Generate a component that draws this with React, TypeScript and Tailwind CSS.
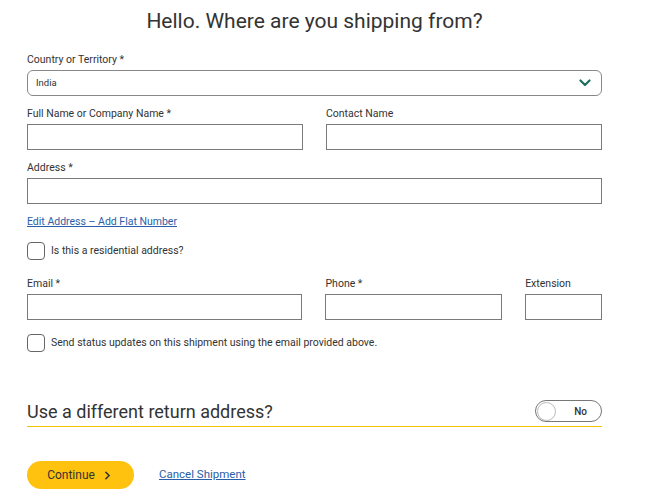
import { ChevronRight } from 'lucide-react';

// Formulario de envío: dirección de origen
function Label({ children }: { children: React.ReactNode }) {
  return <div className="h-[15px] pt-[1px] text-[10.5px] leading-[14px] text-[#333] mb-[3px]">{children}</div>;
}

function Input({ className = '' }: { className?: string }) {
  return <div className={`h-[26px] border border-[#7a7a7a] bg-white ${className}`} />;
}

function Checkbox({ text }: { text: string }) {
  return (
    <div className="flex items-center gap-[6px]">
      <div className="w-[18px] h-[18px] rounded-[4px] border border-[#666] bg-white" />
      <span className="text-[10.5px] leading-[14px] text-[#333]">{text}</span>
    </div>
  );
}

export default function App() {
  return (
    <div className="w-[664px] h-[489px] overflow-hidden bg-white font-['Roboto',sans-serif]">
      <div className="w-[575px] ml-[27px]">
        <h1 className="mt-[7px] h-[28px] text-center text-[21px] leading-[28px] text-[#333]">
          Hello. Where are you shipping from?
        </h1>

        <div className="mt-[17px]">
          <Label>Country or Territory *</Label>
          <div className="h-[26px] rounded-[6px] border border-[#888] flex items-center justify-between pl-[8px] pr-[10px]">
            <span className="text-[9.5px] text-[#333]">India</span>
            <svg width="12" height="8" viewBox="0 0 12 8" fill="none">
              <path d="M1.5 1.5 6 6l4.5-4.5" stroke="#1d6f5f" strokeWidth="2.2" strokeLinecap="round" strokeLinejoin="round" />
            </svg>
          </div>
        </div>

        <div className="mt-[10px] flex gap-[23px]">
          <div className="w-[276px]">
            <Label>Full Name or Company Name *</Label>
            <Input />
          </div>
          <div className="w-[276px]">
            <Label>Contact Name</Label>
            <Input />
          </div>
        </div>

        <div className="mt-[10px]">
          <Label>Address *</Label>
          <Input />
        </div>

        <a href="#" className="block mt-[11px] h-[14px] text-[10.5px] leading-[14px] text-[#2a5ea8] underline">
          Edit Address – Add Flat Number
        </a>

        <div className="mt-[13px]">
          <Checkbox text="Is this a residential address?" />
        </div>

        <div className="mt-[16px] flex gap-[23px]">
          <div className="w-[276px]">
            <Label>Email *</Label>
            <Input />
          </div>
          <div className="w-[177px]">
            <Label>Phone *</Label>
            <Input />
          </div>
          <div className="w-[77px]">
            <Label>Extension</Label>
            <Input />
          </div>
        </div>

        <div className="mt-[14px]">
          <Checkbox text="Send status updates on this shipment using the email provided above." />
        </div>

        <div className="mt-[48px] flex items-center justify-between pb-[4px]">
          <span className="h-[22px] pt-[2px] text-[18px] leading-[20px] text-[#333]">Use a different return address?</span>
          <div className="w-[67px] h-[22px] rounded-full border border-[#777] flex items-center pl-[1px] pr-[14px] justify-between">
            <div className="w-[19px] h-[19px] rounded-full border border-[#bbb] bg-white" />
            <span className="text-[10px] font-medium text-[#333]">No</span>
          </div>
        </div>
        <div className="h-[1px] bg-[#f2c200]" />

        <div className="mt-[34px] flex items-center gap-[25px]">
          <button className="w-[107px] h-[28px] rounded-full bg-[#ffc20e] flex items-center justify-center gap-[6px] text-[12px] text-[#333]">
            Continue
            <ChevronRight size={13} strokeWidth={3} />
          </button>
          <a href="#" className="text-[11.5px] text-[#2a5ea8] underline">Cancel Shipment</a>
        </div>
      </div>
    </div>
  );
}
